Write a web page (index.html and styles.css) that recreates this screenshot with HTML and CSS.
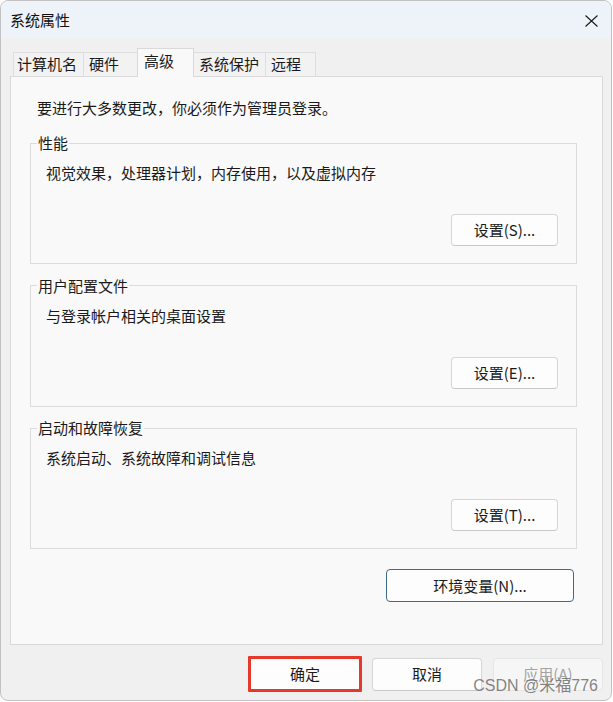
FILE: index.html
```html
<!DOCTYPE html>
<html lang="zh-CN">
<head>
<meta charset="utf-8">
<title>系统属性</title>
<link rel="stylesheet" href="styles.css">
</head>
<body>
<div class="window">
  <div class="titlebar">
    <span class="title">系统属性</span>
    <svg class="close" width="13" height="12" viewBox="0 0 13 12" aria-hidden="true">
      <path d="M0.5 0.5 L12.5 11.5 M12.5 0.5 L0.5 11.5" stroke="#1a1a1a" stroke-width="1.1" fill="none"/>
    </svg>
  </div>
  <div class="content">
    <div class="tabs">
      <div class="tab tab-name">计算机名</div>
      <div class="tab tab-hw">硬件</div>
      <div class="tab tab-adv selected">高级</div>
      <div class="tab tab-prot">系统保护</div>
      <div class="tab tab-remote">远程</div>
    </div>
    <div class="panel">
      <p class="intro">要进行大多数更改，你必须作为管理员登录。</p>
      <fieldset class="group">
        <legend>性能</legend>
        <p class="desc">视觉效果，处理器计划，内存使用，以及虚拟内存</p>
        <div class="group-actions"><button class="btn btn-set">设置(S)...</button></div>
      </fieldset>
      <fieldset class="group">
        <legend>用户配置文件</legend>
        <p class="desc">与登录帐户相关的桌面设置</p>
        <div class="group-actions"><button class="btn btn-set">设置(E)...</button></div>
      </fieldset>
      <fieldset class="group">
        <legend>启动和故障恢复</legend>
        <p class="desc">系统启动、系统故障和调试信息</p>
        <div class="group-actions"><button class="btn btn-set">设置(T)...</button></div>
      </fieldset>
      <div class="env-row"><button class="btn btn-env">环境变量(N)...</button></div>
    </div>
  </div>
  <div class="footer">
    <button class="btn btn-foot btn-ok">确定</button>
    <button class="btn btn-foot">取消</button>
    <button class="btn btn-foot btn-disabled">应用(A)</button>
    <span class="watermark">CSDN @米福776</span>
  </div>
</div>
</body>
</html>
```

FILE: styles.css
```css
* { box-sizing: border-box; }
html, body {
  margin: 0;
  padding: 0;
  background: #ffffff;
}
body {
  font-family: "Noto Sans CJK SC", "Noto Sans", "Liberation Sans", sans-serif;
  font-size: 15px;
  color: #1a1a1a;
}
.window {
  width: 612px;
  height: 701px;
  border: 1px solid #c2c2c2;
  border-radius: 8px;
  overflow: hidden;
  background: #f0f0f0;
  display: flex;
  flex-direction: column;
  position: relative;
}
.titlebar {
  height: 37px;
  background: #eef3f9;
  display: flex;
  align-items: center;
  justify-content: space-between;
  padding: 0 13px 0 9px;
}
.title {
  font-size: 15px;
  line-height: 20px;
  color: #111;
}
.close { display: block; margin-top: 2px; }
.content {
  padding: 10px 8px 0 9px;
}
.tabs {
  display: flex;
  align-items: flex-end;
  height: 28px;
  padding-left: 3px;
}
.tab {
  height: 24px;
  border: 1px solid #dedede;
  border-bottom: none;
  margin-right: -1px;
  background: #f2f2f2;
  line-height: 22px;
  padding-left: 5px;
  white-space: nowrap;
  color: #1a1a1a;
}
.tab-name { width: 71px; padding-left: 3px; }
.tab-hw { width: 55px; }
.tab-adv { width: 57px; }
.tab-prot { width: 73px; }
.tab-remote { width: 51px; }
.tab.selected {
  height: 29px;
  margin-bottom: -1px;
  background: #f9f9f9;
  border-color: #d9d9d9;
  line-height: 24px;
  padding-left: 6px;
  position: relative;
  z-index: 1;
}
.panel {
  border: 1px solid #d9d9d9;
  background: #f9f9f9;
  padding: 21px 25px 42px 19px;
}
.intro {
  margin: 0;
  padding-left: 7px;
  line-height: 20px;
}
.group {
  margin: 15px 0 0 0;
  border: 1px solid #dcdcdc;
  padding: 10px 18px 17px 15px;
  min-inline-size: 0;
}
.group + .group { margin-top: 11.5px; }
.group legend {
  margin-left: -9px;
  padding: 0 1px;
  line-height: 20px;
}
.desc {
  margin: 0;
  line-height: 20px;
}
.group-actions {
  display: flex;
  justify-content: flex-end;
  margin-top: 31px;
}
.btn {
  font-family: inherit;
  font-size: 15px;
  color: #1a1a1a;
  background: #fdfdfd;
  border: 1px solid #d6d6d6;
  border-bottom-color: #c8c8c8;
  border-radius: 4px;
  padding: 0;
  line-height: 20px;
}
.btn-set {
  width: 107px;
  height: 32px;
}
.env-row {
  display: flex;
  justify-content: flex-end;
  margin-top: 20px;
  padding-right: 3px;
}
.btn-env {
  width: 188px;
  height: 33px;
  border: 1px solid #3f6b88;
}
.footer {
  display: flex;
  justify-content: flex-end;
  align-items: center;
  gap: 10px;
  padding: 11px 8px 0 0;
}
.btn-foot {
  width: 110px;
  height: 33px;
}
.btn-ok {
  width: 114px;
  height: 36px;
  border: 3px solid #e5392b;
  border-radius: 1px;
}
.btn-disabled {
  background: #f6f6f6;
  border-color: #e6e6e6;
  color: #a3a3a3;
  margin-left: 1px;
}
.watermark {
  position: absolute;
  right: 13px;
  bottom: 5px;
  font-family: "Liberation Sans", "Noto Sans CJK SC", sans-serif;
  font-size: 16px;
  line-height: 18px;
  color: rgba(110, 110, 110, 0.85);
  white-space: nowrap;
}
```
